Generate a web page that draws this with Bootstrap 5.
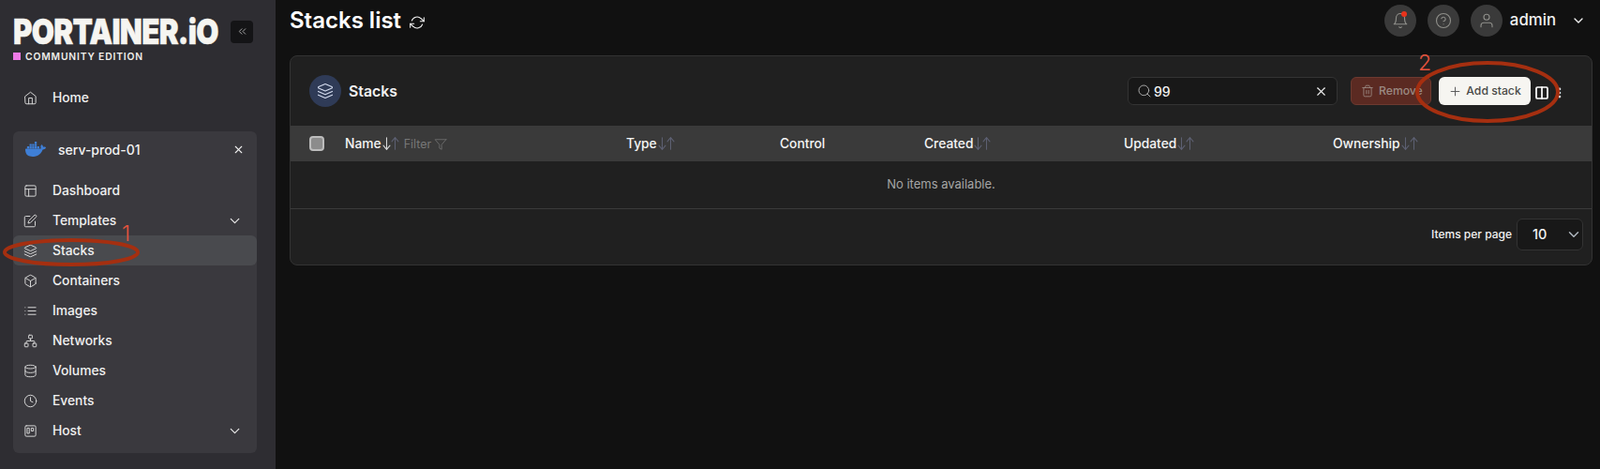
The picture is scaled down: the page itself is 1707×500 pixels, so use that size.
<!doctype html>
<html lang="en" data-bs-theme="dark">
<head>
  <meta charset="utf-8">
  <meta name="viewport" content="width=device-width, initial-scale=1">
  <title>Stacks list</title>
  <link href="https://cdn.jsdelivr.net/npm/bootstrap@5.3.3/dist/css/bootstrap.min.css" rel="stylesheet">
  <style>
    body { background: #111; color: #f2f2f2; font-family: Inter, "Liberation Sans", sans-serif; height: 500px; overflow: hidden; }
    .ico { width: 16px; height: 16px; fill: none; stroke: currentColor; stroke-width: 2; stroke-linecap: round; stroke-linejoin: round; flex: none; }

    /* Sidebar */
    .sidebar { width: 294px; height: 500px; background: #2e2d32; padding: 20px 20px 0 14px; flex: none; }
    .logo { width: 220px; font-size: 37px; font-weight: 900; line-height: 27px; letter-spacing: -.85px; color: #f6f5f1; -webkit-text-stroke: .5px #f6f5f1; white-space: nowrap; transform: scaleX(.845); transform-origin: left center; }
    .edition { font-size: 10.3px; font-weight: 600; line-height: 12px; letter-spacing: .85px; color: #f0efeb; margin-top: 7px; }
    .edition i { width: 8px; height: 8px; background: #ee7ae6; margin-right: 5px; }
    .collapse-btn { width: 24px; height: 24px; background: #141416; color: #bbb; border-radius: 4px; margin-left: 12px; }
    .collapse-btn .ico { width: 13px; height: 13px; stroke-width: 1.6; }
    .side-link { height: 32px; padding: 0 0 0 11px; color: #f0f0f0; font-size: 13.8px; font-weight: 500; text-decoration: none; border-radius: 6px; }
    .side-link.home { margin-top: 22px; }
    .side-link .ico { color: #d4d4d4; width: 15px; height: 15px; margin-right: 16px; stroke-width: 1.6; }
    .side-link .caret { width: 17px; height: 17px; color: #f0f0f0; margin: 0 15px 0 auto; }
    .side-link.active { background: #494a4e; }
    .env-box { background: #3a393e; border-radius: 6px; margin-top: 20px; width: 260px; height: 343px; padding-bottom: 8px; }
    .env-head { height: 38px; padding: 0 13px 0 12px; font-size: 14px; font-weight: 500; margin-bottom: 9px; }
    .env-head .docker { width: 22px; height: 22px; fill: #3f7fd6; margin: 0 13px 0 1px; }
    .env-head .ico { width: 13px; height: 13px; margin-left: auto; }

    /* Header */
    .main { padding: 0 8px 0 15px; min-width: 0; }
    .topbar { height: 44px; margin-bottom: 15px; }
    .page-title { font-size: 24px; font-weight: 600; margin: 0; line-height: 44px; }
    .refresh { width: 16px; height: 16px; stroke-width: 1.6; margin-left: 9px; }
    .round-btn { width: 34px; height: 34px; border-radius: 50%; background: #3a3a3a; color: #8f8f8a; margin-right: 12px; position: relative; }
    .round-btn .ico { width: 18px; height: 18px; stroke-width: 1.5; }
    .round-btn .dot { position: absolute; top: 7px; right: 10px; width: 6px; height: 6px; border-radius: 50%; background: #e8331c; }
    .user-name { font-size: 16.8px; font-weight: 500; margin-left: -4px; }

    /* Card */
    .stack-card { background: #202020; border: 1px solid #333; border-radius: 8px; height: 224px; overflow: hidden; }
    .card-top { height: 74px; padding: 0 0 0 20px; }
    .title-icon { width: 34px; height: 34px; border-radius: 50%; background: #2f3b57; color: #d5ddf0; margin-right: 8px; }
    .title-icon .ico { stroke-width: 1.5; width: 18px; height: 18px; }
    .card-name { font-size: 15.8px; font-weight: 600; padding-top: 1px; }
    .search-box { width: 224px; height: 30px; background: #181818; border: 1px solid #333; border-radius: 6px; padding: 0 10px 0 9px; font-size: 14px; font-weight: 500; margin-right: 14px; }
    .search-box .ico { width: 16px; height: 16px; stroke-width: 1.5; color: #aaa; margin-right: 2px; }
    .search-box .clear { color: #eee; width: 15px; height: 15px; stroke-width: 1.8; margin: 0 -1px 0 auto; }
    .btn-remove { width: 86px; height: 30px; background: #5b2a22; border: 1px solid #6d3a30; color: #9c8a83; font-size: 12.2px; font-weight: 500; border-radius: 6px; margin-right: 8px; padding: 0 0 0 10px; }
    .btn-remove .ico { width: 14px; height: 14px; stroke-width: 1.5; margin-right: 5px; }
    .btn-add { width: 98px; height: 30px; background: #f6f5f1; color: #4a4a48; font-size: 12.2px; font-weight: 500; border: 0; border-radius: 6px; padding: 0; }
    .btn-add .ico { width: 15px; height: 15px; stroke-width: 1.5; margin-right: 4px; color: #555; }
    .tool-ico { color: #fff; margin-left: 4px; stroke-width: 2.6; }
    .tool-ico.more { margin: 0 27px 0 4px; width: 14px; height: 14px; color: #ddd; }

    .stack-table { width: 100%; table-layout: fixed; margin: 0; }
    .stack-table th { background: #3a3a3a; height: 38px; padding: 0 0 0 8px; font-size: 13.8px; font-weight: 500; color: #f4f4f4; vertical-align: middle; border: 0; white-space: nowrap; }
    .stack-table th:first-child { padding-left: 20px; }
    .stack-table td { height: 50px; padding: 0; text-align: center; font-size: 13px; color: #a5a5a5; background: #202020; border-bottom: 1px solid #3a3a3a; vertical-align: middle; }
    .stack-table .form-check-input { width: 16px; height: 16px; margin: 0; background-color: #8c8c8c; border: 2px solid #bdbdbd; border-radius: 4px; display: block; }
    .sort { width: 9px; height: 14px; color: #5d6072; stroke-width: 1.5; vertical-align: -2px; }
    .sort.first { margin-left: 1px; }
    .sort.on { color: #d8d8d8; }
    .filter { color: #777; font-size: 12.5px; font-weight: 400; margin-left: 5px; }
    .filter .ico { width: 14px; height: 14px; stroke-width: 1.3; margin-left: 3px; vertical-align: -3px; }
    .card-foot { height: 60px; padding: 0 9px 5px 0; font-size: 12px; font-weight: 500; }
    .per-page { width: 71px; height: 34px; background-color: #181818; background-position: right 3px center; background-size: 12px; border: 1px solid #333; border-radius: 6px; font-size: 14.5px; font-weight: 500; color: #f2f2f2; padding: 0 0 0 16px; margin-left: 5px; }

    /* Red hand-drawn notes over the screenshot */
    .notes { position: absolute; left: 0; top: 0; width: 1707px; height: 500px; pointer-events: none; }
    .notes ellipse { fill: none; stroke: #a52f10; stroke-width: 4; }
    .notes text { fill: #e5533d; font-size: 23px; font-family: Inter, "Liberation Sans", sans-serif; font-weight: 300; }
  </style>
</head>
<body class="position-relative">
  <svg class="d-none">
    <symbol id="i-home" viewBox="0 0 24 24"><path d="m3 9 9-7 9 7v11a2 2 0 0 1-2 2H5a2 2 0 0 1-2-2z"/><polyline points="9 22 9 12 15 12 15 22"/></symbol>
    <symbol id="i-layout" viewBox="0 0 24 24"><rect x="3" y="3" width="18" height="18" rx="2"/><line x1="3" y1="9" x2="21" y2="9"/><line x1="9" y1="21" x2="9" y2="9"/></symbol>
    <symbol id="i-edit" viewBox="0 0 24 24"><path d="M11 4H4a2 2 0 0 0-2 2v14a2 2 0 0 0 2 2h14a2 2 0 0 0 2-2v-7"/><path d="M18.5 2.5a2.121 2.121 0 0 1 3 3L12 15l-4 1 1-4 9.5-9.5z"/></symbol>
    <symbol id="i-layers" viewBox="0 0 24 24"><path d="M12.8 2.2a2 2 0 0 0-1.6 0L2.6 6.1a1 1 0 0 0 0 1.8l8.6 3.9a2 2 0 0 0 1.6 0l8.6-3.9a1 1 0 0 0 0-1.8Z"/><path d="m22 17.6-9.2 4.2a2 2 0 0 1-1.6 0L2 17.6"/><path d="m22 12.6-9.2 4.2a2 2 0 0 1-1.6 0L2 12.6"/></symbol>
    <symbol id="i-box" viewBox="0 0 24 24"><path d="M21 16V8a2 2 0 0 0-1-1.73l-7-4a2 2 0 0 0-2 0l-7 4A2 2 0 0 0 3 8v8a2 2 0 0 0 1 1.73l7 4a2 2 0 0 0 2 0l7-4A2 2 0 0 0 21 16z"/><polyline points="3.27 6.96 12 12.01 20.73 6.96"/><line x1="12" y1="22.08" x2="12" y2="12"/></symbol>
    <symbol id="i-list" viewBox="0 0 24 24"><line x1="8" y1="6" x2="21" y2="6"/><line x1="8" y1="12" x2="21" y2="12"/><line x1="8" y1="18" x2="21" y2="18"/><line x1="3" y1="6" x2="3.01" y2="6"/><line x1="3" y1="12" x2="3.01" y2="12"/><line x1="3" y1="18" x2="3.01" y2="18"/></symbol>
    <symbol id="i-network" viewBox="0 0 24 24"><rect x="16" y="16" width="6" height="6" rx="1"/><rect x="2" y="16" width="6" height="6" rx="1"/><rect x="9" y="2" width="6" height="6" rx="1"/><path d="M5 16v-3a1 1 0 0 1 1-1h12a1 1 0 0 1 1 1v3"/><path d="M12 12V8"/></symbol>
    <symbol id="i-db" viewBox="0 0 24 24"><ellipse cx="12" cy="5" rx="9" ry="3"/><path d="M21 12c0 1.66-4 3-9 3s-9-1.34-9-3"/><path d="M3 5v14c0 1.66 4 3 9 3s9-1.34 9-3V5"/></symbol>
    <symbol id="i-clock" viewBox="0 0 24 24"><circle cx="12" cy="12" r="10"/><polyline points="12 6 12 12 16 14"/></symbol>
    <symbol id="i-host" viewBox="0 0 24 24"><rect x="3" y="3" width="18" height="18" rx="2"/><rect x="7" y="7" width="3" height="9"/><rect x="14" y="7" width="3" height="5"/></symbol>
    <symbol id="i-down" viewBox="0 0 24 24"><polyline points="6 9 12 15 18 9"/></symbol>
    <symbol id="i-x" viewBox="0 0 24 24"><line x1="18" y1="6" x2="6" y2="18"/><line x1="6" y1="6" x2="18" y2="18"/></symbol>
    <symbol id="i-arrow-down" viewBox="6 2 12 20"><line x1="12" y1="3" x2="12" y2="21"/><polyline points="7 15 12 21 17 15"/></symbol>
    <symbol id="i-arrow-up" viewBox="6 2 12 20"><line x1="12" y1="21" x2="12" y2="3"/><polyline points="7 9 12 3 17 9"/></symbol>
  </svg>

  <div class="d-flex">
    <aside class="sidebar">
      <div class="d-flex align-items-center">
        <div class="logo">PORTAINER.iO</div>
        <a class="collapse-btn d-flex align-items-center justify-content-center">
          <svg class="ico" viewBox="0 0 24 24"><polyline points="11 17 6 12 11 7"/><polyline points="18 17 13 12 18 7"/></svg>
        </a>
      </div>
      <div class="edition d-flex align-items-center"><i class="d-block"></i>COMMUNITY EDITION</div>

      <a class="side-link home d-flex align-items-center" href="#"><svg class="ico"><use href="#i-home"/></svg>Home</a>

      <div class="env-box">
        <div class="env-head d-flex align-items-center">
          <svg class="docker" viewBox="0 0 24 24"><path d="M13.983 11.078h2.119a.186.186 0 00.186-.185V9.006a.186.186 0 00-.186-.186h-2.119a.185.185 0 00-.185.185v1.888c0 .102.083.185.185.185m-2.954-5.43h2.118a.186.186 0 00.186-.186V3.574a.186.186 0 00-.186-.185h-2.118a.185.185 0 00-.185.185v1.888c0 .102.082.185.185.186m0 2.716h2.118a.187.187 0 00.186-.186V6.29a.186.186 0 00-.186-.185h-2.118a.185.185 0 00-.185.185v1.887c0 .102.082.185.185.186m-2.93 0h2.12a.186.186 0 00.184-.186V6.29a.185.185 0 00-.185-.185H8.1a.185.185 0 00-.185.185v1.887c0 .102.083.185.185.186m-2.964 0h2.119a.186.186 0 00.185-.186V6.29a.185.185 0 00-.185-.185H5.136a.186.186 0 00-.186.185v1.887c0 .102.084.185.186.186m5.893 2.715h2.118a.186.186 0 00.186-.185V9.006a.186.186 0 00-.186-.186h-2.118a.185.185 0 00-.185.185v1.888c0 .102.082.185.185.185m-2.93 0h2.12a.185.185 0 00.184-.185V9.006a.185.185 0 00-.184-.186h-2.12a.185.185 0 00-.184.185v1.888c0 .102.083.185.185.185m-2.964 0h2.119a.185.185 0 00.185-.185V9.006a.185.185 0 00-.184-.186h-2.12a.186.186 0 00-.186.186v1.887c0 .102.084.185.186.185m-2.92 0h2.12a.185.185 0 00.184-.185V9.006a.185.185 0 00-.184-.186h-2.12a.185.185 0 00-.184.185v1.888c0 .102.082.185.185.185M23.763 9.89c-.065-.051-.672-.51-1.954-.51-.338.001-.676.03-1.01.087-.248-1.7-1.653-2.53-1.716-2.566l-.344-.199-.226.327c-.284.438-.49.922-.612 1.43-.23.97-.09 1.882.403 2.661-.595.332-1.55.413-1.744.42H.751a.751.751 0 00-.75.748 11.376 11.376 0 00.692 4.062c.545 1.428 1.355 2.48 2.41 3.124 1.18.723 3.1 1.137 5.275 1.137.983.003 1.963-.086 2.93-.266a12.248 12.248 0 003.823-1.389c.98-.567 1.86-1.288 2.61-2.136 1.252-1.418 1.998-2.997 2.553-4.4h.221c1.372 0 2.215-.549 2.68-1.009.309-.293.55-.65.707-1.046l.098-.288Z"/></svg>
          serv-prod-01
          <svg class="ico"><use href="#i-x"/></svg>
        </div>
        <a class="side-link d-flex align-items-center" href="#"><svg class="ico"><use href="#i-layout"/></svg>Dashboard</a>
        <a class="side-link d-flex align-items-center" href="#"><svg class="ico"><use href="#i-edit"/></svg>Templates<svg class="ico caret"><use href="#i-down"/></svg></a>
        <a class="side-link active d-flex align-items-center" href="#"><svg class="ico"><use href="#i-layers"/></svg>Stacks</a>
        <a class="side-link d-flex align-items-center" href="#"><svg class="ico"><use href="#i-box"/></svg>Containers</a>
        <a class="side-link d-flex align-items-center" href="#"><svg class="ico"><use href="#i-list"/></svg>Images</a>
        <a class="side-link d-flex align-items-center" href="#"><svg class="ico"><use href="#i-network"/></svg>Networks</a>
        <a class="side-link d-flex align-items-center" href="#"><svg class="ico"><use href="#i-db"/></svg>Volumes</a>
        <a class="side-link d-flex align-items-center" href="#"><svg class="ico"><use href="#i-clock"/></svg>Events</a>
        <a class="side-link d-flex align-items-center" href="#"><svg class="ico"><use href="#i-host"/></svg>Host<svg class="ico caret"><use href="#i-down"/></svg></a>
      </div>
    </aside>

    <main class="main flex-grow-1">
      <div class="topbar d-flex align-items-center">
        <h1 class="page-title">Stacks list</h1>
        <svg class="ico refresh mt-1" viewBox="0 0 24 24"><polyline points="23 4 23 10 17 10"/><polyline points="1 20 1 14 7 14"/><path d="M3.51 9a9 9 0 0 1 14.85-3.36L23 10M1 14l4.64 4.36A9 9 0 0 0 20.49 15"/></svg>
        <div class="ms-auto d-flex align-items-center">
          <div class="round-btn d-flex align-items-center justify-content-center">
            <svg class="ico" viewBox="0 0 24 24"><path d="M18 8A6 6 0 0 0 6 8c0 7-3 9-3 9h18s-3-2-3-9"/><path d="M13.73 21a2 2 0 0 1-3.46 0"/></svg>
            <span class="dot"></span>
          </div>
          <div class="round-btn d-flex align-items-center justify-content-center">
            <svg class="ico" viewBox="0 0 24 24"><circle cx="12" cy="12" r="10"/><path d="M9.09 9a3 3 0 0 1 5.83 1c0 2-3 3-3 3"/><line x1="12" y1="17" x2="12.01" y2="17"/></svg>
          </div>
          <div class="round-btn d-flex align-items-center justify-content-center">
            <svg class="ico" viewBox="0 0 24 24"><path d="M20 21v-2a4 4 0 0 0-4-4H8a4 4 0 0 0-4 4v2"/><circle cx="12" cy="7" r="4"/></svg>
          </div>
          <span class="user-name">admin</span>
          <svg class="ico" style="margin:0 7px 0 16px"><use href="#i-down"/></svg>
        </div>
      </div>

      <div class="stack-card">
        <div class="card-top d-flex align-items-center">
          <span class="title-icon d-flex align-items-center justify-content-center"><svg class="ico"><use href="#i-layers"/></svg></span>
          <span class="card-name">Stacks</span>
          <div class="ms-auto d-flex align-items-center">
            <div class="search-box d-flex align-items-center">
              <svg class="ico" viewBox="0 0 24 24"><circle cx="11" cy="11" r="8"/><line x1="21" y1="21" x2="16.65" y2="16.65"/></svg>99
              <svg class="ico clear"><use href="#i-x"/></svg>
            </div>
            <button class="btn btn-remove d-flex align-items-center" type="button">
              <svg class="ico" viewBox="0 0 24 24"><polyline points="3 6 5 6 21 6"/><path d="M19 6v14a2 2 0 0 1-2 2H7a2 2 0 0 1-2-2V6m3 0V4a2 2 0 0 1 2-2h4a2 2 0 0 1 2 2v2"/><line x1="10" y1="11" x2="10" y2="17"/><line x1="14" y1="11" x2="14" y2="17"/></svg>Remove
            </button>
            <button class="btn btn-add d-flex align-items-center justify-content-center" type="button">
              <svg class="ico" viewBox="0 0 24 24"><line x1="12" y1="5" x2="12" y2="19"/><line x1="5" y1="12" x2="19" y2="12"/></svg>Add stack
            </button>
            <svg class="ico tool-ico mt-1" viewBox="0 0 24 24"><rect x="3" y="3" width="18" height="18" rx="2"/><line x1="12" y1="3" x2="12" y2="21"/></svg>
            <svg class="ico tool-ico more mt-1" viewBox="0 0 24 24"><circle cx="12" cy="5" r="1"/><circle cx="12" cy="12" r="1"/><circle cx="12" cy="19" r="1"/></svg>
          </div>
        </div>

        <table class="table stack-table">
          <colgroup><col style="width:50px"><col style="width:300px"><col style="width:164px"><col style="width:154px"><col style="width:213px"><col style="width:223px"><col></colgroup>
          <thead>
            <tr>
              <th><input class="form-check-input" type="checkbox"></th>
              <th>Name<svg class="ico sort first on"><use href="#i-arrow-down"/></svg><svg class="ico sort"><use href="#i-arrow-up"/></svg><span class="filter">Filter<svg class="ico" viewBox="0 0 24 24"><polygon points="22 3 2 3 10 12.46 10 19 14 21 14 12.46 22 3"/></svg></span></th>
              <th>Type<svg class="ico sort first"><use href="#i-arrow-down"/></svg><svg class="ico sort"><use href="#i-arrow-up"/></svg></th>
              <th>Control</th>
              <th>Created<svg class="ico sort first"><use href="#i-arrow-down"/></svg><svg class="ico sort"><use href="#i-arrow-up"/></svg></th>
              <th>Updated<svg class="ico sort first"><use href="#i-arrow-down"/></svg><svg class="ico sort"><use href="#i-arrow-up"/></svg></th>
              <th>Ownership<svg class="ico sort first"><use href="#i-arrow-down"/></svg><svg class="ico sort"><use href="#i-arrow-up"/></svg></th>
            </tr>
          </thead>
          <tbody>
            <tr><td colspan="7">No items available.</td></tr>
          </tbody>
        </table>

        <div class="card-foot d-flex align-items-center justify-content-end">
          Items per page
          <select class="form-select per-page"><option>10</option><option>25</option><option>50</option></select>
        </div>
      </div>
    </main>
  </div>

  <svg class="notes" viewBox="0 0 1707 500">
    <ellipse cx="76" cy="269" rx="71" ry="13"/>
    <ellipse cx="1587" cy="98" rx="75" ry="31"/>
    <text x="130" y="257">1</text>
    <text x="1513" y="75">2</text>
  </svg>

  <script src="https://cdn.jsdelivr.net/npm/bootstrap@5.3.3/dist/js/bootstrap.bundle.min.js"></script>
</body>
</html>
